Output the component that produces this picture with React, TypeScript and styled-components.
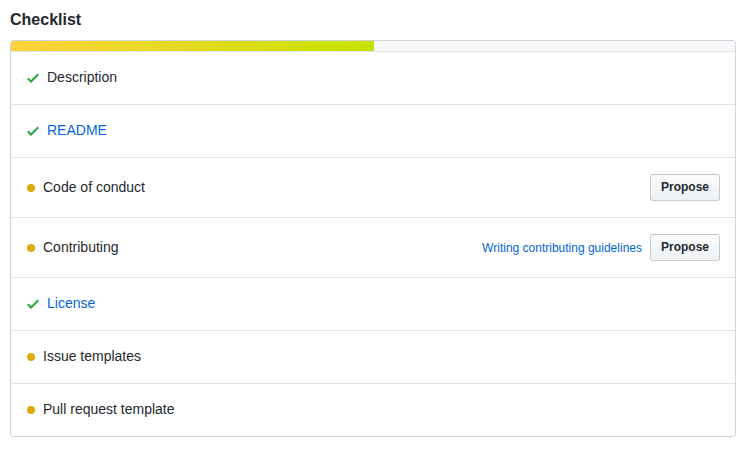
import React from "react";
import styled, { createGlobalStyle } from "styled-components";

const GlobalStyle = createGlobalStyle`
  html, body { margin: 0; padding: 0; background: #ffffff; }
  body {
    font-family: "Liberation Sans", Arial, Helvetica, sans-serif;
    color: #24292e;
    font-size: 14px;
    line-height: 1.5;
  }
`;

const Page = styled.div`
  padding: 8px 12px 10px 10px;
`;

const Title = styled.h2`
  margin: 0 0 8px 0;
  font-size: 16px;
  font-weight: 700;
  line-height: 24px;
  color: #24292e;
`;

const Box = styled.div`
  width: 724px;
  border: 1px solid #d1d5da;
  border-radius: 3px;
  overflow: hidden;
`;

const Progress = styled.div`
  height: 10px;
  background: #f6f8fa;
  border-bottom: 1px solid #e1e4e8;
  display: flex;
`;

const ProgressFill = styled.div`
  height: 100%;
  background: linear-gradient(to right, #ffd33d, #c6e300);
`;

const Row = styled.div<{ $last?: boolean }>`
  display: flex;
  align-items: center;
  padding: 16px;
  border-bottom: ${(p) => (p.$last ? "none" : "1px solid #e1e4e8")};
  min-height: 20px;
`;

const Label = styled.span<{ $link?: boolean }>`
  flex: 1;
  font-size: 14px;
  line-height: 18px;
  padding-bottom: 2px;
  color: ${(p) => (p.$link ? "#0366d6" : "#24292e")};
`;

const CheckIcon = styled.svg`
  width: 12px;
  height: 16px;
  fill: #28a745;
  margin-right: 8px;
  flex: none;
`;

const Dot = styled.span`
  width: 8px;
  height: 8px;
  border-radius: 50%;
  background: #dbab09;
  margin-right: 8px;
  flex: none;
`;

const Actions = styled.div`
  display: flex;
  align-items: center;
  gap: 8px;
  margin-right: -1px;
`;

const HelpLink = styled.a`
  font-size: 12px;
  color: #0366d6;
  text-decoration: none;
`;

const Button = styled.button`
  font-family: inherit;
  font-size: 12px;
  font-weight: 700;
  line-height: 20px;
  height: 27px;
  padding: 1px 10px 3px;
  color: #24292e;
  background: linear-gradient(-180deg, #fafbfc 0%, #eff3f6 90%);
  border: 1px solid rgba(27, 31, 35, 0.2);
  border-radius: 3px;
  cursor: pointer;
`;

type Item = {
  label: string;
  done: boolean;
  link?: boolean;
  propose?: boolean;
  help?: string;
};

const items: Item[] = [
  { label: "Description", done: true },
  { label: "README", done: true, link: true },
  { label: "Code of conduct", done: false, propose: true },
  { label: "Contributing", done: false, propose: true, help: "Writing contributing guidelines" },
  { label: "License", done: true, link: true },
  { label: "Issue templates", done: false },
  { label: "Pull request template", done: false },
];

const Check = () => (
  <CheckIcon viewBox="0 0 12 16" aria-hidden="true">
    <path fillRule="evenodd" d="M12 5l-8 8-4-4 1.5-1.5L4 10l6.5-6.5L12 5z" />
  </CheckIcon>
);

export default function App() {
  return (
    <>
      <GlobalStyle />
      <Page>
        <Title>Checklist</Title>
        <Box>
          <Progress>
            <ProgressFill style={{ width: "50.1%" }} />
          </Progress>
          {items.map((it, i) => (
            <Row key={it.label} $last={i === items.length - 1}>
              {it.done ? <Check /> : <Dot />}
              <Label $link={it.link}>{it.label}</Label>
              {(it.propose || it.help) && (
                <Actions>
                  {it.help && <HelpLink href="#">{it.help}</HelpLink>}
                  {it.propose && <Button>Propose</Button>}
                </Actions>
              )}
            </Row>
          ))}
        </Box>
      </Page>
    </>
  );
}
